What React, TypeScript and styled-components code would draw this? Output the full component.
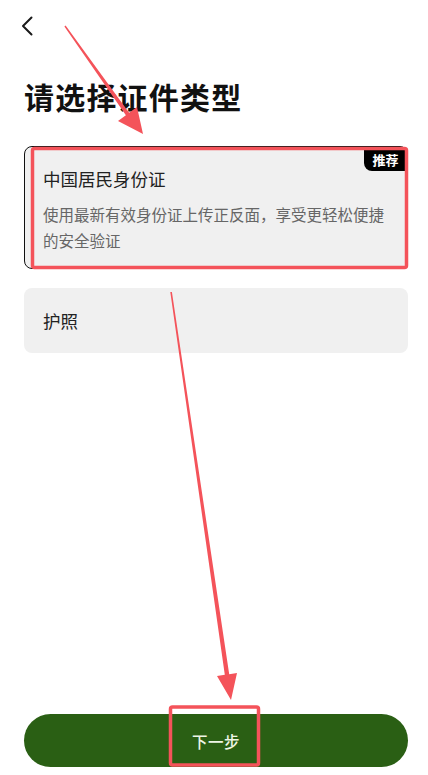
import React from "react";
import styled, { createGlobalStyle } from "styled-components";

const GlobalStyle = createGlobalStyle`
  html, body {
    margin: 0;
    padding: 0;
    background: #ffffff;
  }
  body {
    font-family: "Noto Sans CJK SC", "Noto Sans", sans-serif;
    -webkit-font-smoothing: antialiased;
  }
  * {
    box-sizing: border-box;
  }
`;

const Page = styled.div`
  position: relative;
  display: flex;
  flex-direction: column;
  width: 428px;
  height: 775px;
  padding: 0 20px 8px 24px;
  overflow: hidden;
`;

const Header = styled.div`
  display: flex;
  align-items: center;
  height: 52px;
  margin-left: -8px;
`;

const BackButton = styled.button`
  display: flex;
  align-items: center;
  justify-content: center;
  width: 24px;
  height: 24px;
  padding: 0;
  border: none;
  background: transparent;
  color: #1a1a1a;
`;

const Title = styled.h1`
  margin: 23px 0 0;
  font-size: 30px;
  line-height: 42px;
  font-weight: 700;
  color: #111111;
  letter-spacing: 1.2px;
`;

const OptionList = styled.div`
  display: flex;
  flex-direction: column;
  gap: 19px;
  margin-top: 29px;
`;

const Option = styled.div<{ $selected?: boolean }>`
  position: relative;
  display: flex;
  flex-direction: column;
  justify-content: center;
  min-height: 65px;
  padding: ${({ $selected }) => ($selected ? "19px 18px 15px" : "0 18px")};
  border: 1.5px solid ${({ $selected }) => ($selected ? "#111111" : "transparent")};
  border-radius: 8px;
  background: #f0f0f0;
  overflow: hidden;
`;

const OptionName = styled.div`
  font-size: 17.5px;
  line-height: 26px;
  color: #222222;
`;

const OptionDesc = styled.div`
  margin-top: 9px;
  font-size: 15.5px;
  line-height: 26px;
  color: #666666;
`;

const Badge = styled.span`
  position: absolute;
  top: 0;
  right: 0;
  display: flex;
  align-items: center;
  justify-content: center;
  width: 43px;
  height: 24px;
  border-bottom-left-radius: 8px;
  background: #000000;
  color: #ffffff;
  font-size: 13px;
  font-weight: 700;
`;

const Spacer = styled.div`
  flex: 1;
`;

const NextButton = styled.button`
  width: 384px;
  height: 53px;
  border: none;
  border-radius: 27px;
  background: #2a5f14;
  color: #eef5e6;
  font-family: "Noto Sans CJK SC", sans-serif;
  font-size: 15.5px;
  font-weight: 500;
  letter-spacing: 0.5px;
`;

const Annotations = styled.svg`
  position: absolute;
  top: 0;
  left: 0;
  width: 428px;
  height: 775px;
  pointer-events: none;
`;

const RED = "#f4535a";

export default function App() {
  return (
    <>
      <GlobalStyle />
      <Page>
        <Header>
          <BackButton aria-label="返回">
            <svg width="24" height="24" viewBox="0 0 24 24" fill="none">
              <path
                d="M15.5 3.5L7 12L15.5 20.5"
                stroke="currentColor"
                strokeWidth="2"
                strokeLinecap="round"
                strokeLinejoin="round"
              />
            </svg>
          </BackButton>
        </Header>

        <Title>请选择证件类型</Title>

        <OptionList>
          <Option $selected>
            <Badge>推荐</Badge>
            <OptionName>中国居民身份证</OptionName>
            <OptionDesc>使用最新有效身份证上传正反面，享受更轻松便捷的安全验证</OptionDesc>
          </Option>
          <Option>
            <OptionName>护照</OptionName>
          </Option>
        </OptionList>

        <Spacer />

        <NextButton>下一步</NextButton>

        <Annotations viewBox="0 0 428 775">
          <rect x="32.5" y="148.5" width="374" height="119" rx="2" fill="none" stroke={RED} strokeWidth="3.5" />
          <rect x="170.5" y="707" width="88" height="58" rx="2" fill="none" stroke={RED} strokeWidth="3.5" />
          <polygon
            fill={RED}
            points="65.6,25.6 129.1,112.8 137,107 143,134 118,121 125.9,115.2 64.4,26.4"
          />
          <polygon
            fill={RED}
            points="171.9,291.9 229.2,674.2 237,673 231,700 217,676 224.8,674.8 170.3,292.1"
          />
        </Annotations>
      </Page>
    </>
  );
}
